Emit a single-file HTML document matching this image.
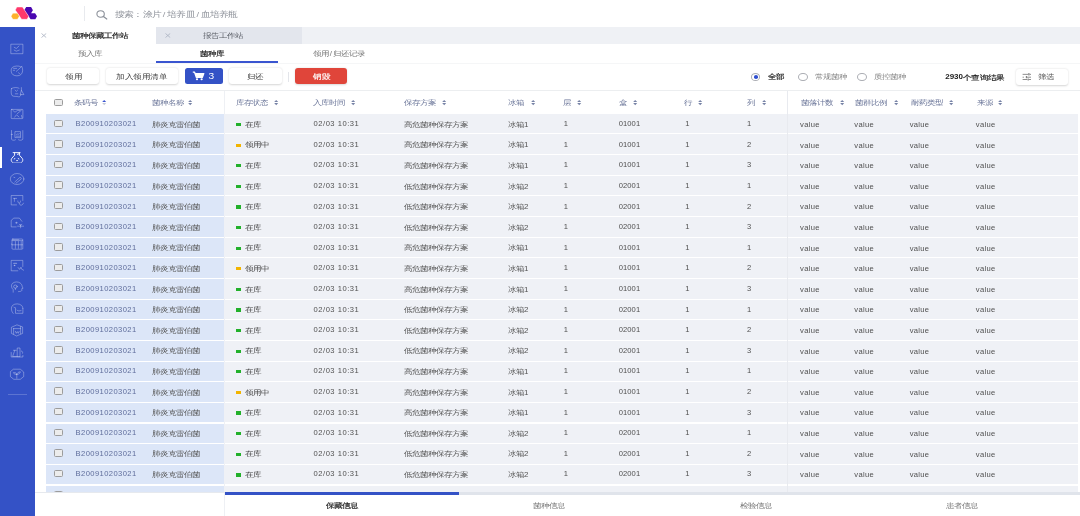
<!DOCTYPE html><html><head><meta charset="utf-8"><style>
*{margin:0;padding:0;box-sizing:border-box}
html,body{width:1080px;height:516px;overflow:hidden;background:#fff}
body{font-family:"Liberation Sans",sans-serif;position:relative;color:#555}
#w{position:absolute;left:0;top:0;width:1080px;height:516px;will-change:transform;overflow:hidden}
.a{position:absolute;white-space:nowrap}
.k{}

.s{line-height:10px;transform:scaleY(0.82);transform-origin:0 4.85px}
.s.l{transform:scaleY(0.92)}
</style></head><body><div id="w">
<div class="a" style="left:0px;top:26.5px;width:1080px;height:1px;background:#eef0f4"></div>
<svg class="a" style="left:0;top:0" width="40" height="24" viewBox="0 0 40 24">
<polygon points="24.3,9.9 26.2,7 31.1,7 32.9,10.2 31.1,13.2 35.1,13.2 37,16.3 35.3,19.3 30.6,19.3" fill="#4a06b0"/>
<polygon points="15.3,10.1 16.9,7 22.5,7 28.7,16.3 27.1,19.3 21.6,19.3" fill="#ff386c" stroke="#fff" stroke-width="0.45"/>
<polygon points="11.1,16.25 12.9,13.2 17.5,13.2 19.3,16.25 17.5,19.3 12.9,19.3" fill="#fdb22c" stroke="#fff" stroke-width="0.35"/>
</svg>
<div class="a" style="left:84px;top:6px;width:1px;height:15px;background:#e8eaee"></div>
<svg class="a" style="left:95px;top:9px" width="14" height="11" viewBox="0 0 14 11">
<ellipse cx="5.6" cy="5.0" rx="3.7" ry="3.3" fill="none" stroke="#8b9099" stroke-width="1.1"/>
<path d="M8.4 7.5 L11.8 10" stroke="#8b9099" stroke-width="1.2" stroke-linecap="round"/></svg>
<div class="a s k" style="left:115.2px;top:9.75px;font-size:9.2px;color:#8e929a;letter-spacing:0.15px">搜索：涂片<span style="margin:0 1.8px">/</span>培养皿<span style="margin:0 1.8px">/</span>血培养瓶</div>
<div class="a" style="left:0px;top:27px;width:34.6px;height:489px;background:#3452c6"></div>
<div class="a" style="left:0px;top:147.3px;width:2.4px;height:21px;background:#fff"></div>
<div class="a" style="left:8px;top:394px;width:19px;height:1px;background:rgba(255,255,255,0.2)"></div>
<svg class="a" style="left:5px;top:40px;color:rgba(255,255,255,0.34)" width="24" height="18" viewBox="0 0 24 18"><g fill="none" stroke="currentColor" stroke-width="0.95" stroke-linecap="round" stroke-linejoin="round"><rect x="6.2" y="4.2" width="11.7" height="9.5"/><path d="M9.2 7.3 L11.3 8.5 L14 6"/><path d="M9.2 10.1 L11.3 11.2 L14.3 10.1"/></g></svg>
<svg class="a" style="left:5px;top:62px;color:rgba(255,255,255,0.34)" width="24" height="18" viewBox="0 0 24 18"><g fill="none" stroke="currentColor" stroke-width="0.95" stroke-linecap="round" stroke-linejoin="round"><path d="M15.5 4.6 C13.5 3.6 9.5 3.8 7.5 5.3 C5.6 6.8 5.8 10.8 7.8 12.6 C9.8 14.2 14 14.3 16 12.5 C17.8 10.9 18.3 7.2 16.9 4.6"/><path d="M11.3 9.4 L16.8 4.4"/><path d="M8.6 6.4 H11.6"/><path d="M8.3 8.3 H9.6"/><path d="M13.5 10.8 L14.5 11.5"/></g></svg>
<svg class="a" style="left:5px;top:83px;color:rgba(255,255,255,0.34)" width="24" height="18" viewBox="0 0 24 18"><g fill="none" stroke="currentColor" stroke-width="0.95" stroke-linecap="round" stroke-linejoin="round"><path d="M6.5 5.5 C6 8 6 11 7 12.5 C9 14 11.5 13 13.5 13.8 C14.8 14.2 15.5 12.8 16 11.6"/><path d="M6.5 5.5 C9 4.2 12 4.2 14 5.2"/><path d="M10.1 7.2 L11.3 8.4 L12.6 7.2"/><path d="M10.3 10.8 H12.8"/><path d="M16.4 4.6 V7.4 L18.9 11.6 H15.2 L16.4 7.4"/></g></svg>
<svg class="a" style="left:5px;top:105px;color:rgba(255,255,255,0.34)" width="24" height="18" viewBox="0 0 24 18"><g fill="none" stroke="currentColor" stroke-width="0.95" stroke-linecap="round" stroke-linejoin="round"><rect x="6.2" y="4.4" width="11.7" height="9.2" rx="0.6"/><path d="M8 5.6 L10 7.2 L12.6 5.4 L15 5.5"/><path d="M12.3 8.6 L16.3 5.4"/><path d="M9.6 12.2 L11.5 9.8 L14 12"/><path d="M16.5 10.5 L17 12.5"/></g></svg>
<svg class="a" style="left:5px;top:126px;color:rgba(255,255,255,0.34)" width="24" height="18" viewBox="0 0 24 18"><g fill="none" stroke="currentColor" stroke-width="0.95" stroke-linecap="round" stroke-linejoin="round"><path d="M6.5 4.5 V13.3 C7.5 14.5 9.5 14.5 10.5 13.8"/><path d="M17.8 4.6 V13.3 C16.8 14.5 14.5 14.5 13.5 13.8"/><path d="M6.2 8.4 H7.6"/><rect x="10.3" y="5.6" width="5.2" height="6"/><path d="M11.5 8.3 C12.5 7.2 13.5 9 14.5 7.8"/><path d="M11.3 10.2 H14.6"/></g></svg>
<svg class="a" style="left:0px;top:148px;color:rgba(255,255,255,0.95)" width="24" height="18" viewBox="0 0 24 18"><g fill="none" stroke="currentColor" stroke-width="0.95" stroke-linecap="round" stroke-linejoin="round" stroke-width="1.05"><path d="M13.1 4.6 H20.1"/><path d="M14.6 4.7 V7.2 L11.8 10.3 C10.9 11.5 11 13.2 12.3 14.3"/><path d="M19.4 4.7 V7.2 L22.2 10.3 C23.1 11.5 23 13.2 21.7 14.3"/><path d="M12.8 14.5 H21.2" stroke-opacity="0.35"/><path d="M17.4 6.3 L19.2 5.7"/><path d="M14.2 10.9 L14.9 10.6"/><path d="M18.2 10.6 L18.9 10.9"/><path d="M16.6 12.6 H17.6"/></g></svg>
<svg class="a" style="left:5px;top:170px;color:rgba(255,255,255,0.34)" width="24" height="18" viewBox="0 0 24 18"><g fill="none" stroke="currentColor" stroke-width="0.95" stroke-linecap="round" stroke-linejoin="round"><ellipse cx="12.1" cy="9" rx="6.8" ry="5.5"/><path d="M9.8 12 L14.6 7.6 C15.6 6.8 16.9 8.4 16 9.2 L11.2 13"/><path d="M8.9 7.3 L9.8 7.6"/></g></svg>
<svg class="a" style="left:5px;top:191px;color:rgba(255,255,255,0.34)" width="24" height="18" viewBox="0 0 24 18"><g fill="none" stroke="currentColor" stroke-width="0.95" stroke-linecap="round" stroke-linejoin="round"><path d="M11.5 13.9 H6.2 V4.5 H17.8 V9.5"/><path d="M8.5 7.4 H11.6"/><path d="M9.4 7.4 V10.4"/><path d="M12.8 10 C12.8 12.8 15.6 12.8 15.6 10"/><path d="M14.3 12.5 C14.5 14.8 17.5 15 18.4 12.2"/></g></svg>
<svg class="a" style="left:5px;top:213px;color:rgba(255,255,255,0.34)" width="24" height="18" viewBox="0 0 24 18"><g fill="none" stroke="currentColor" stroke-width="0.95" stroke-linecap="round" stroke-linejoin="round"><path d="M11.2 13.9 H6.2 V7.4 L8.8 5.1 H14.4 L16.9 8.3"/><circle cx="11.3" cy="9.8" r="0.6"/><path d="M12.6 13.2 H18.6"/><path d="M15.6 11.5 V14.8"/><path d="M14.3 11.2 L15.6 12.5 L16.9 11.2"/></g></svg>
<svg class="a" style="left:5px;top:234px;color:rgba(255,255,255,0.34)" width="24" height="18" viewBox="0 0 24 18"><g fill="none" stroke="currentColor" stroke-width="0.95" stroke-linecap="round" stroke-linejoin="round"><rect x="7" y="5" width="10.8" height="10.2" rx="0.8"/><path d="M7.2 6.6 H17.6"/><path d="M8.2 5.8 H13.8"/><path d="M10.4 7.5 V14.3 M13.4 7.5 V14.3 M16.2 7.5 V14.3"/><path d="M7.2 10.8 H17.6"/><path d="M6.3 10 L7.1 10.6"/></g></svg>
<svg class="a" style="left:5px;top:256px;color:rgba(255,255,255,0.34)" width="24" height="18" viewBox="0 0 24 18"><g fill="none" stroke="currentColor" stroke-width="0.95" stroke-linecap="round" stroke-linejoin="round"><path d="M12.8 14.8 H6.2 V4.4 H17.8 V10.5"/><path d="M8.7 7.4 H11.6" stroke-width="1.1"/><circle cx="9.4" cy="9.4" r="0.4"/><path d="M13.2 11.6 L14.6 13.4 L16 11.2 L16.4 13 L18.6 14.2"/></g></svg>
<svg class="a" style="left:5px;top:277px;color:rgba(255,255,255,0.34)" width="24" height="18" viewBox="0 0 24 18"><g fill="none" stroke="currentColor" stroke-width="0.95" stroke-linecap="round" stroke-linejoin="round"><path d="M8.2 15.2 V12.6 C6.2 11 5.8 7.4 8 6 C10 4.6 13.2 4.6 15.2 6 C16.6 7 17 8.3 17.2 9.4 L18 11.3 L16.8 11.6 V13.6 C16.5 14.3 15 14.5 13.5 14.6"/><ellipse cx="10.4" cy="9.6" rx="1.8" ry="1.6"/><path d="M10.4 11.3 V12.6"/></g></svg>
<svg class="a" style="left:5px;top:299px;color:rgba(255,255,255,0.34)" width="24" height="18" viewBox="0 0 24 18"><g fill="none" stroke="currentColor" stroke-width="0.95" stroke-linecap="round" stroke-linejoin="round"><path d="M8.2 14.4 C6 12 5.7 8.2 7.8 6.2 C10 4.3 14.5 4.6 16.4 6.3 C17.6 7.4 17.8 8.5 17.8 9.4"/><path d="M9 8.3 L9.6 8.6"/><path d="M10.5 8.8 V14.3 H17.9 V9.4"/><path d="M12 11.2 C13 12.2 14.5 12 16 11.6"/></g></svg>
<svg class="a" style="left:5px;top:320px;color:rgba(255,255,255,0.34)" width="24" height="18" viewBox="0 0 24 18"><g fill="none" stroke="currentColor" stroke-width="0.95" stroke-linecap="round" stroke-linejoin="round"><path d="M11.6 5 L6.4 7.3 V13.4 L11.6 16 L17.6 13.4 V7.3 Z"/><path d="M8.6 8.4 V14 M8.6 8.6 H15.6 M15.6 6.6 V13.8"/><path d="M10.4 11.3 L11.3 13.3 L12.3 11.6 L13.3 13.3 L14.2 11.3"/></g></svg>
<svg class="a" style="left:5px;top:342px;color:rgba(255,255,255,0.34)" width="24" height="18" viewBox="0 0 24 18"><g fill="none" stroke="currentColor" stroke-width="0.95" stroke-linecap="round" stroke-linejoin="round"><path d="M6.2 10.5 V15 H17.9 V13.4"/><rect x="12.6" y="6" width="2.4" height="8.6"/><path d="M8.4 8.3 H11.3"/><path d="M9.8 8.3 L7.6 14.5 H12"/><path d="M16.4 9 C17.4 9.3 17.9 10 17.6 11.2"/></g></svg>
<svg class="a" style="left:5px;top:364px;color:rgba(255,255,255,0.34)" width="24" height="18" viewBox="0 0 24 18"><g fill="none" stroke="currentColor" stroke-width="0.95" stroke-linecap="round" stroke-linejoin="round"><path d="M8.8 5.2 H15.3 L18.7 8 V12.6 L15.3 15.3 H8.8 L5.4 12.6 V8 Z"/><path d="M11.8 10.3 V14.3"/><path d="M11.8 10.4 C10.8 10.6 8.8 10.3 8.4 8.6 C10 8.1 11.4 9 11.8 10.4 C12.4 8.7 13.6 7.8 15.4 7.8 C15 9.8 13.4 10.4 11.8 10.4"/></g></svg>
<div class="a" style="left:34.6px;top:27px;width:1046px;height:16.6px;background:#eff1f5"></div>
<div class="a" style="left:35px;top:27px;width:121px;height:16.6px;background:#fff"></div>
<div class="a" style="left:156px;top:27px;width:146px;height:16.6px;background:#e3e6ed"></div>
<svg class="a" style="left:41px;top:33px" width="6" height="5" viewBox="0 0 6 5"><path d="M0.5 0.5 L5.2 4.5 M5.2 0.5 L0.5 4.5" stroke="#a9b1c2" stroke-width="0.8"/></svg>
<svg class="a" style="left:165.2px;top:33px" width="6" height="5" viewBox="0 0 6 5"><path d="M0.5 0.5 L5.2 4.5 M5.2 0.5 L0.5 4.5" stroke="#a9b1c2" stroke-width="0.8"/></svg>
<div class="a s" style="left:72px;top:31.05px;font-size:8px;color:#222;-webkit-text-stroke:0.22px currentColor">菌种保藏工作站</div>
<div class="a s k" style="left:202.8px;top:30.85px;font-size:8px;color:#5c6068">报告工作站</div>
<div class="a s k" style="left:78.4px;top:48.75px;font-size:8px;color:#777">预入库</div>
<div class="a s" style="left:200.4px;top:48.75px;font-size:8px;color:#222;-webkit-text-stroke:0.22px currentColor">菌种库</div>
<div class="a s k" style="left:313.1px;top:48.75px;font-size:8px;color:#777">领用<span style="margin:0 0.75px">/</span>归还记录</div>
<div class="a" style="left:156.3px;top:61.1px;width:121.5px;height:2px;background:#3a55d0"></div>
<div class="a" style="left:34.6px;top:63.2px;width:1046px;height:1px;background:#f5f6f7"></div>
<div class="a" style="left:46.7px;top:68px;width:52.6px;height:16px;background:#fff;border-radius:3px;box-shadow:0 0.6px 2px rgba(0,0,0,0.17)"></div><div class="a s k" style="left:65.0px;top:71.65px;font-size:8px;color:#3a3a3a;letter-spacing:0.6px">领用</div>
<div class="a" style="left:105.9px;top:68px;width:72.2px;height:16px;background:#fff;border-radius:3px;box-shadow:0 0.6px 2px rgba(0,0,0,0.17)"></div><div class="a s k" style="left:116px;top:71.65px;font-size:8px;color:#3a3a3a;letter-spacing:0.6px">加入领用清单</div>
<div class="a" style="left:185px;top:67.8px;width:37.8px;height:16px;background:#3452c6;border-radius:2.5px"></div>
<svg class="a" style="left:191.5px;top:70.8px" width="13" height="10" viewBox="0 0 13 10">
<path d="M0.8 1.2 H2.6 L4.3 6.4 H10.3 L11.8 2.6 H3.3" fill="none" stroke="#fff" stroke-width="1.3" stroke-linejoin="round"/>
<path d="M3.6 2.6 H11.8 L10.3 6.4 H4.3Z" fill="#fff"/>
<ellipse cx="5.0" cy="8.3" rx="1.1" ry="0.95" fill="#fff"/><ellipse cx="9.6" cy="8.3" rx="1.1" ry="0.95" fill="#fff"/></svg>
<div class="a s l" style="left:208.4px;top:70.75px;font-size:10.2px;color:#fff">3</div>
<div class="a" style="left:229.2px;top:68px;width:52.5px;height:16px;background:#fff;border-radius:3px;box-shadow:0 0.6px 2px rgba(0,0,0,0.17)"></div><div class="a s k" style="left:246.7px;top:71.65px;font-size:8px;color:#3a3a3a;letter-spacing:0.6px">归还</div>
<div class="a" style="left:288px;top:71.7px;width:1px;height:10px;background:#e3e5ea"></div>
<div class="a" style="left:295px;top:68.3px;width:51.7px;height:16.2px;background:#e0453a;border-radius:3px;box-shadow:0 0.6px 2px rgba(0,0,0,0.15)"></div>
<div class="a s" style="left:313.3px;top:71.75px;font-size:8px;color:#fff;-webkit-text-stroke:0.22px currentColor;letter-spacing:0.5px">销毁</div>
<div class="a" style="left:751.1px;top:72.9px;width:9.4px;height:8px;background:#fff;border:1px solid #acaeb4;border-radius:50%"></div><div class="a" style="left:753.6px;top:75.15px;width:4.4px;height:3.7px;background:#2f4fd0;border-radius:50%"></div>
<div class="a s" style="left:768px;top:72.45px;font-size:8px;color:#222;-webkit-text-stroke:0.22px currentColor">全部</div>
<div class="a" style="left:798.3px;top:72.9px;width:9.4px;height:8px;background:#fff;border:1px solid #acaeb4;border-radius:50%"></div>
<div class="a s k" style="left:815.2px;top:72.45px;font-size:8px;color:#888">常规菌种</div>
<div class="a" style="left:857.3px;top:72.9px;width:9.4px;height:8px;background:#fff;border:1px solid #acaeb4;border-radius:50%"></div>
<div class="a s k" style="left:873.8px;top:72.45px;font-size:8px;color:#888">质控菌种</div>
<div class="a s l" style="left:945.2px;top:72.45px;font-size:8px;color:#222;font-weight:bold">2930</div>
<div class="a s" style="left:963.2px;top:72.65px;font-size:8px;color:#222;-webkit-text-stroke:0.22px currentColor;letter-spacing:0.25px">个查询结果</div>
<div class="a" style="left:1016px;top:69px;width:52px;height:16px;background:#fff;border-radius:3px;box-shadow:0 0.6px 2px rgba(0,0,0,0.17)"></div>
<svg class="a" style="left:1022px;top:72px" width="10" height="10" viewBox="0 0 10 10">
<g stroke="#7a7a7a" stroke-width="0.85" fill="none">
<path d="M0.6 2.35 H6.3 M7.5 2.35 H9"/><path d="M6.9 1.1 V3.6" stroke-width="1.1"/>
<path d="M0.6 5.2 H1.9 M5 5.2 H9"/><path d="M4.4 4.1 V6.3" stroke-width="1.1"/>
<path d="M0.6 7.5 H5.4 M7 7.5 H9"/><path d="M6.2 6.4 V8.6" stroke-width="1.1"/>
</g></svg>
<div class="a s k" style="left:1038px;top:72.45px;font-size:8px;color:#555">筛选</div>
<div class="a" style="left:34.6px;top:89.9px;width:1046px;height:1px;background:#eceef0"></div>
<div class="a" style="left:223.6px;top:90.5px;width:1px;height:402px;background:#eef0f4"></div>
<div class="a" style="left:54.2px;top:98.90px;width:8.6px;height:7.4px;border:1px solid #9c9c9c;border-radius:1.5px;background:#ececec"></div>
<div class="a s k" style="left:74px;top:97.90px;font-size:8px;color:#6b7699">条码号</div>
<svg class="a" style="left:102px;top:100px" width="5" height="6" viewBox="0 0 5 6"><path d="M0.2 2.1 L2.2 0 L4.2 2.1Z" fill="#3a55d0"/><path d="M0.2 3 L2.2 5.2 L4.2 3Z" fill="#c5cad6"/></svg>
<div class="a s k" style="left:152px;top:97.90px;font-size:8px;color:#6b7699">菌种名称</div>
<svg class="a" style="left:188px;top:100px" width="5" height="6" viewBox="0 0 5 6"><path d="M0.2 2.1 L2.2 0 L4.2 2.1Z" fill="#7783a6"/><path d="M0.2 3 L2.2 5.2 L4.2 3Z" fill="#7783a6"/></svg>
<div class="a s k" style="left:236px;top:97.90px;font-size:8px;color:#6b7699">库存状态</div>
<svg class="a" style="left:274px;top:100px" width="5" height="6" viewBox="0 0 5 6"><path d="M0.2 2.1 L2.2 0 L4.2 2.1Z" fill="#7783a6"/><path d="M0.2 3 L2.2 5.2 L4.2 3Z" fill="#7783a6"/></svg>
<div class="a s k" style="left:313.3px;top:97.90px;font-size:8px;color:#6b7699">入库时间</div>
<svg class="a" style="left:351px;top:100px" width="5" height="6" viewBox="0 0 5 6"><path d="M0.2 2.1 L2.2 0 L4.2 2.1Z" fill="#7783a6"/><path d="M0.2 3 L2.2 5.2 L4.2 3Z" fill="#7783a6"/></svg>
<div class="a s k" style="left:404px;top:97.90px;font-size:8px;color:#6b7699">保存方案</div>
<svg class="a" style="left:442px;top:100px" width="5" height="6" viewBox="0 0 5 6"><path d="M0.2 2.1 L2.2 0 L4.2 2.1Z" fill="#7783a6"/><path d="M0.2 3 L2.2 5.2 L4.2 3Z" fill="#7783a6"/></svg>
<div class="a s k" style="left:508px;top:97.90px;font-size:8px;color:#6b7699">冰箱</div>
<svg class="a" style="left:531px;top:100px" width="5" height="6" viewBox="0 0 5 6"><path d="M0.2 2.1 L2.2 0 L4.2 2.1Z" fill="#7783a6"/><path d="M0.2 3 L2.2 5.2 L4.2 3Z" fill="#7783a6"/></svg>
<div class="a s k" style="left:562.8px;top:97.90px;font-size:8px;color:#6b7699">层</div>
<svg class="a" style="left:577px;top:100px" width="5" height="6" viewBox="0 0 5 6"><path d="M0.2 2.1 L2.2 0 L4.2 2.1Z" fill="#7783a6"/><path d="M0.2 3 L2.2 5.2 L4.2 3Z" fill="#7783a6"/></svg>
<div class="a s k" style="left:619.2px;top:97.90px;font-size:8px;color:#6b7699">盒</div>
<svg class="a" style="left:633px;top:100px" width="5" height="6" viewBox="0 0 5 6"><path d="M0.2 2.1 L2.2 0 L4.2 2.1Z" fill="#7783a6"/><path d="M0.2 3 L2.2 5.2 L4.2 3Z" fill="#7783a6"/></svg>
<div class="a s k" style="left:684.4px;top:97.90px;font-size:8px;color:#6b7699">行</div>
<svg class="a" style="left:698px;top:100px" width="5" height="6" viewBox="0 0 5 6"><path d="M0.2 2.1 L2.2 0 L4.2 2.1Z" fill="#7783a6"/><path d="M0.2 3 L2.2 5.2 L4.2 3Z" fill="#7783a6"/></svg>
<div class="a s k" style="left:747px;top:97.90px;font-size:8px;color:#6b7699">列</div>
<svg class="a" style="left:762px;top:100px" width="5" height="6" viewBox="0 0 5 6"><path d="M0.2 2.1 L2.2 0 L4.2 2.1Z" fill="#7783a6"/><path d="M0.2 3 L2.2 5.2 L4.2 3Z" fill="#7783a6"/></svg>
<div class="a s k" style="left:801px;top:97.90px;font-size:8px;color:#6b7699">菌落计数</div>
<svg class="a" style="left:840px;top:100px" width="5" height="6" viewBox="0 0 5 6"><path d="M0.2 2.1 L2.2 0 L4.2 2.1Z" fill="#7783a6"/><path d="M0.2 3 L2.2 5.2 L4.2 3Z" fill="#7783a6"/></svg>
<div class="a s k" style="left:855.2px;top:97.90px;font-size:8px;color:#6b7699">菌群比例</div>
<svg class="a" style="left:894px;top:100px" width="5" height="6" viewBox="0 0 5 6"><path d="M0.2 2.1 L2.2 0 L4.2 2.1Z" fill="#7783a6"/><path d="M0.2 3 L2.2 5.2 L4.2 3Z" fill="#7783a6"/></svg>
<div class="a s k" style="left:910.6px;top:97.90px;font-size:8px;color:#6b7699">耐药类型</div>
<svg class="a" style="left:949px;top:100px" width="5" height="6" viewBox="0 0 5 6"><path d="M0.2 2.1 L2.2 0 L4.2 2.1Z" fill="#7783a6"/><path d="M0.2 3 L2.2 5.2 L4.2 3Z" fill="#7783a6"/></svg>
<div class="a s k" style="left:976.7px;top:97.90px;font-size:8px;color:#6b7699">来源</div>
<svg class="a" style="left:998px;top:100px" width="5" height="6" viewBox="0 0 5 6"><path d="M0.2 2.1 L2.2 0 L4.2 2.1Z" fill="#7783a6"/><path d="M0.2 3 L2.2 5.2 L4.2 3Z" fill="#7783a6"/></svg>
<div class="a" style="left:46px;top:113.8px;width:178px;height:19.6px;background:#dce6f8"></div>
<div class="a" style="left:224px;top:113.8px;width:853.8px;height:19.6px;background:#eff1f6"></div>
<div class="a" style="left:54.2px;top:119.55px;width:8.6px;height:7.4px;border:1px solid #9c9c9c;border-radius:1.5px;background:#ececec"></div>
<div class="a s l" style="left:75.6px;top:119.10px;font-size:7.6px;color:#5f6d9c;letter-spacing:0.4px">B200910203021</div>
<div class="a s k" style="left:152px;top:119.70px;font-size:8px;color:#555">肺炎克雷伯菌</div>
<div class="a" style="left:236px;top:122.95px;width:4.6px;height:3.2px;background:#22b02a"></div>
<div class="a s k" style="left:245.4px;top:119.70px;font-size:8px;color:#444">在库</div>
<div class="a s l" style="left:313.6px;top:119.10px;font-size:7.6px;color:#505050;letter-spacing:0.5px">02/03 10:31</div>
<div class="a s k" style="left:404px;top:119.70px;font-size:8px;color:#555">高危菌种保存方案</div>
<div class="a s k" style="left:508px;top:119.70px;font-size:8px;color:#555">冰箱1</div>
<div class="a s l" style="left:563.7px;top:119.10px;font-size:7.6px;color:#505050">1</div>
<div class="a s l" style="left:618.8px;top:119.10px;font-size:7.6px;color:#505050;letter-spacing:0.05px">01001</div>
<div class="a s l" style="left:685.3px;top:119.10px;font-size:7.6px;color:#505050">1</div>
<div class="a s l" style="left:747px;top:119.10px;font-size:7.6px;color:#505050">1</div>
<div class="a s l" style="left:800.1px;top:119.90px;font-size:7.6px;color:#505050;letter-spacing:0.3px">value</div>
<div class="a s l" style="left:854.3px;top:119.90px;font-size:7.6px;color:#505050;letter-spacing:0.3px">value</div>
<div class="a s l" style="left:909.7px;top:119.90px;font-size:7.6px;color:#505050;letter-spacing:0.3px">value</div>
<div class="a s l" style="left:975.8px;top:119.90px;font-size:7.6px;color:#505050;letter-spacing:0.3px">value</div>
<div class="a" style="left:46px;top:134.45px;width:178px;height:19.6px;background:#dce6f8"></div>
<div class="a" style="left:224px;top:134.45px;width:853.8px;height:19.6px;background:#eff1f6"></div>
<div class="a" style="left:54.2px;top:140.16px;width:8.6px;height:7.4px;border:1px solid #9c9c9c;border-radius:1.5px;background:#ececec"></div>
<div class="a s l" style="left:75.6px;top:139.71px;font-size:7.6px;color:#5f6d9c;letter-spacing:0.4px">B200910203021</div>
<div class="a s k" style="left:152px;top:140.31px;font-size:8px;color:#555">肺炎克雷伯菌</div>
<div class="a" style="left:236px;top:143.56px;width:4.6px;height:3.2px;background:#f2b400"></div>
<div class="a s k" style="left:245.4px;top:140.31px;font-size:8px;color:#444">领用中</div>
<div class="a s l" style="left:313.6px;top:139.71px;font-size:7.6px;color:#505050;letter-spacing:0.5px">02/03 10:31</div>
<div class="a s k" style="left:404px;top:140.31px;font-size:8px;color:#555">高危菌种保存方案</div>
<div class="a s k" style="left:508px;top:140.31px;font-size:8px;color:#555">冰箱1</div>
<div class="a s l" style="left:563.7px;top:139.71px;font-size:7.6px;color:#505050">1</div>
<div class="a s l" style="left:618.8px;top:139.71px;font-size:7.6px;color:#505050;letter-spacing:0.05px">01001</div>
<div class="a s l" style="left:685.3px;top:139.71px;font-size:7.6px;color:#505050">1</div>
<div class="a s l" style="left:747px;top:139.71px;font-size:7.6px;color:#505050">2</div>
<div class="a s l" style="left:800.1px;top:140.51px;font-size:7.6px;color:#505050;letter-spacing:0.3px">value</div>
<div class="a s l" style="left:854.3px;top:140.51px;font-size:7.6px;color:#505050;letter-spacing:0.3px">value</div>
<div class="a s l" style="left:909.7px;top:140.51px;font-size:7.6px;color:#505050;letter-spacing:0.3px">value</div>
<div class="a s l" style="left:975.8px;top:140.51px;font-size:7.6px;color:#505050;letter-spacing:0.3px">value</div>
<div class="a" style="left:46px;top:155.1px;width:178px;height:19.6px;background:#dce6f8"></div>
<div class="a" style="left:224px;top:155.1px;width:853.8px;height:19.6px;background:#eff1f6"></div>
<div class="a" style="left:54.2px;top:160.77px;width:8.6px;height:7.4px;border:1px solid #9c9c9c;border-radius:1.5px;background:#ececec"></div>
<div class="a s l" style="left:75.6px;top:160.32px;font-size:7.6px;color:#5f6d9c;letter-spacing:0.4px">B200910203021</div>
<div class="a s k" style="left:152px;top:160.92px;font-size:8px;color:#555">肺炎克雷伯菌</div>
<div class="a" style="left:236px;top:164.17px;width:4.6px;height:3.2px;background:#22b02a"></div>
<div class="a s k" style="left:245.4px;top:160.92px;font-size:8px;color:#444">在库</div>
<div class="a s l" style="left:313.6px;top:160.32px;font-size:7.6px;color:#505050;letter-spacing:0.5px">02/03 10:31</div>
<div class="a s k" style="left:404px;top:160.92px;font-size:8px;color:#555">高危菌种保存方案</div>
<div class="a s k" style="left:508px;top:160.92px;font-size:8px;color:#555">冰箱1</div>
<div class="a s l" style="left:563.7px;top:160.32px;font-size:7.6px;color:#505050">1</div>
<div class="a s l" style="left:618.8px;top:160.32px;font-size:7.6px;color:#505050;letter-spacing:0.05px">01001</div>
<div class="a s l" style="left:685.3px;top:160.32px;font-size:7.6px;color:#505050">1</div>
<div class="a s l" style="left:747px;top:160.32px;font-size:7.6px;color:#505050">3</div>
<div class="a s l" style="left:800.1px;top:161.12px;font-size:7.6px;color:#505050;letter-spacing:0.3px">value</div>
<div class="a s l" style="left:854.3px;top:161.12px;font-size:7.6px;color:#505050;letter-spacing:0.3px">value</div>
<div class="a s l" style="left:909.7px;top:161.12px;font-size:7.6px;color:#505050;letter-spacing:0.3px">value</div>
<div class="a s l" style="left:975.8px;top:161.12px;font-size:7.6px;color:#505050;letter-spacing:0.3px">value</div>
<div class="a" style="left:46px;top:175.75px;width:178px;height:19.6px;background:#dce6f8"></div>
<div class="a" style="left:224px;top:175.75px;width:853.8px;height:19.6px;background:#eff1f6"></div>
<div class="a" style="left:54.2px;top:181.38px;width:8.6px;height:7.4px;border:1px solid #9c9c9c;border-radius:1.5px;background:#ececec"></div>
<div class="a s l" style="left:75.6px;top:180.93px;font-size:7.6px;color:#5f6d9c;letter-spacing:0.4px">B200910203021</div>
<div class="a s k" style="left:152px;top:181.53px;font-size:8px;color:#555">肺炎克雷伯菌</div>
<div class="a" style="left:236px;top:184.78px;width:4.6px;height:3.2px;background:#22b02a"></div>
<div class="a s k" style="left:245.4px;top:181.53px;font-size:8px;color:#444">在库</div>
<div class="a s l" style="left:313.6px;top:180.93px;font-size:7.6px;color:#505050;letter-spacing:0.5px">02/03 10:31</div>
<div class="a s k" style="left:404px;top:181.53px;font-size:8px;color:#555">低危菌种保存方案</div>
<div class="a s k" style="left:508px;top:181.53px;font-size:8px;color:#555">冰箱2</div>
<div class="a s l" style="left:563.7px;top:180.93px;font-size:7.6px;color:#505050">1</div>
<div class="a s l" style="left:618.8px;top:180.93px;font-size:7.6px;color:#505050;letter-spacing:0.05px">02001</div>
<div class="a s l" style="left:685.3px;top:180.93px;font-size:7.6px;color:#505050">1</div>
<div class="a s l" style="left:747px;top:180.93px;font-size:7.6px;color:#505050">1</div>
<div class="a s l" style="left:800.1px;top:181.73px;font-size:7.6px;color:#505050;letter-spacing:0.3px">value</div>
<div class="a s l" style="left:854.3px;top:181.73px;font-size:7.6px;color:#505050;letter-spacing:0.3px">value</div>
<div class="a s l" style="left:909.7px;top:181.73px;font-size:7.6px;color:#505050;letter-spacing:0.3px">value</div>
<div class="a s l" style="left:975.8px;top:181.73px;font-size:7.6px;color:#505050;letter-spacing:0.3px">value</div>
<div class="a" style="left:46px;top:196.4px;width:178px;height:19.6px;background:#dce6f8"></div>
<div class="a" style="left:224px;top:196.4px;width:853.8px;height:19.6px;background:#eff1f6"></div>
<div class="a" style="left:54.2px;top:201.99px;width:8.6px;height:7.4px;border:1px solid #9c9c9c;border-radius:1.5px;background:#ececec"></div>
<div class="a s l" style="left:75.6px;top:201.54px;font-size:7.6px;color:#5f6d9c;letter-spacing:0.4px">B200910203021</div>
<div class="a s k" style="left:152px;top:202.14px;font-size:8px;color:#555">肺炎克雷伯菌</div>
<div class="a" style="left:236px;top:205.39px;width:4.6px;height:3.2px;background:#22b02a"></div>
<div class="a s k" style="left:245.4px;top:202.14px;font-size:8px;color:#444">在库</div>
<div class="a s l" style="left:313.6px;top:201.54px;font-size:7.6px;color:#505050;letter-spacing:0.5px">02/03 10:31</div>
<div class="a s k" style="left:404px;top:202.14px;font-size:8px;color:#555">低危菌种保存方案</div>
<div class="a s k" style="left:508px;top:202.14px;font-size:8px;color:#555">冰箱2</div>
<div class="a s l" style="left:563.7px;top:201.54px;font-size:7.6px;color:#505050">1</div>
<div class="a s l" style="left:618.8px;top:201.54px;font-size:7.6px;color:#505050;letter-spacing:0.05px">02001</div>
<div class="a s l" style="left:685.3px;top:201.54px;font-size:7.6px;color:#505050">1</div>
<div class="a s l" style="left:747px;top:201.54px;font-size:7.6px;color:#505050">2</div>
<div class="a s l" style="left:800.1px;top:202.34px;font-size:7.6px;color:#505050;letter-spacing:0.3px">value</div>
<div class="a s l" style="left:854.3px;top:202.34px;font-size:7.6px;color:#505050;letter-spacing:0.3px">value</div>
<div class="a s l" style="left:909.7px;top:202.34px;font-size:7.6px;color:#505050;letter-spacing:0.3px">value</div>
<div class="a s l" style="left:975.8px;top:202.34px;font-size:7.6px;color:#505050;letter-spacing:0.3px">value</div>
<div class="a" style="left:46px;top:217.05px;width:178px;height:19.6px;background:#dce6f8"></div>
<div class="a" style="left:224px;top:217.05px;width:853.8px;height:19.6px;background:#eff1f6"></div>
<div class="a" style="left:54.2px;top:222.60px;width:8.6px;height:7.4px;border:1px solid #9c9c9c;border-radius:1.5px;background:#ececec"></div>
<div class="a s l" style="left:75.6px;top:222.15px;font-size:7.6px;color:#5f6d9c;letter-spacing:0.4px">B200910203021</div>
<div class="a s k" style="left:152px;top:222.75px;font-size:8px;color:#555">肺炎克雷伯菌</div>
<div class="a" style="left:236px;top:226.0px;width:4.6px;height:3.2px;background:#22b02a"></div>
<div class="a s k" style="left:245.4px;top:222.75px;font-size:8px;color:#444">在库</div>
<div class="a s l" style="left:313.6px;top:222.15px;font-size:7.6px;color:#505050;letter-spacing:0.5px">02/03 10:31</div>
<div class="a s k" style="left:404px;top:222.75px;font-size:8px;color:#555">低危菌种保存方案</div>
<div class="a s k" style="left:508px;top:222.75px;font-size:8px;color:#555">冰箱2</div>
<div class="a s l" style="left:563.7px;top:222.15px;font-size:7.6px;color:#505050">1</div>
<div class="a s l" style="left:618.8px;top:222.15px;font-size:7.6px;color:#505050;letter-spacing:0.05px">02001</div>
<div class="a s l" style="left:685.3px;top:222.15px;font-size:7.6px;color:#505050">1</div>
<div class="a s l" style="left:747px;top:222.15px;font-size:7.6px;color:#505050">3</div>
<div class="a s l" style="left:800.1px;top:222.95px;font-size:7.6px;color:#505050;letter-spacing:0.3px">value</div>
<div class="a s l" style="left:854.3px;top:222.95px;font-size:7.6px;color:#505050;letter-spacing:0.3px">value</div>
<div class="a s l" style="left:909.7px;top:222.95px;font-size:7.6px;color:#505050;letter-spacing:0.3px">value</div>
<div class="a s l" style="left:975.8px;top:222.95px;font-size:7.6px;color:#505050;letter-spacing:0.3px">value</div>
<div class="a" style="left:46px;top:237.7px;width:178px;height:19.6px;background:#dce6f8"></div>
<div class="a" style="left:224px;top:237.7px;width:853.8px;height:19.6px;background:#eff1f6"></div>
<div class="a" style="left:54.2px;top:243.21px;width:8.6px;height:7.4px;border:1px solid #9c9c9c;border-radius:1.5px;background:#ececec"></div>
<div class="a s l" style="left:75.6px;top:242.76px;font-size:7.6px;color:#5f6d9c;letter-spacing:0.4px">B200910203021</div>
<div class="a s k" style="left:152px;top:243.36px;font-size:8px;color:#555">肺炎克雷伯菌</div>
<div class="a" style="left:236px;top:246.61px;width:4.6px;height:3.2px;background:#22b02a"></div>
<div class="a s k" style="left:245.4px;top:243.36px;font-size:8px;color:#444">在库</div>
<div class="a s l" style="left:313.6px;top:242.76px;font-size:7.6px;color:#505050;letter-spacing:0.5px">02/03 10:31</div>
<div class="a s k" style="left:404px;top:243.36px;font-size:8px;color:#555">高危菌种保存方案</div>
<div class="a s k" style="left:508px;top:243.36px;font-size:8px;color:#555">冰箱1</div>
<div class="a s l" style="left:563.7px;top:242.76px;font-size:7.6px;color:#505050">1</div>
<div class="a s l" style="left:618.8px;top:242.76px;font-size:7.6px;color:#505050;letter-spacing:0.05px">01001</div>
<div class="a s l" style="left:685.3px;top:242.76px;font-size:7.6px;color:#505050">1</div>
<div class="a s l" style="left:747px;top:242.76px;font-size:7.6px;color:#505050">1</div>
<div class="a s l" style="left:800.1px;top:243.56px;font-size:7.6px;color:#505050;letter-spacing:0.3px">value</div>
<div class="a s l" style="left:854.3px;top:243.56px;font-size:7.6px;color:#505050;letter-spacing:0.3px">value</div>
<div class="a s l" style="left:909.7px;top:243.56px;font-size:7.6px;color:#505050;letter-spacing:0.3px">value</div>
<div class="a s l" style="left:975.8px;top:243.56px;font-size:7.6px;color:#505050;letter-spacing:0.3px">value</div>
<div class="a" style="left:46px;top:258.35px;width:178px;height:19.6px;background:#dce6f8"></div>
<div class="a" style="left:224px;top:258.35px;width:853.8px;height:19.6px;background:#eff1f6"></div>
<div class="a" style="left:54.2px;top:263.82px;width:8.6px;height:7.4px;border:1px solid #9c9c9c;border-radius:1.5px;background:#ececec"></div>
<div class="a s l" style="left:75.6px;top:263.37px;font-size:7.6px;color:#5f6d9c;letter-spacing:0.4px">B200910203021</div>
<div class="a s k" style="left:152px;top:263.97px;font-size:8px;color:#555">肺炎克雷伯菌</div>
<div class="a" style="left:236px;top:267.22px;width:4.6px;height:3.2px;background:#f2b400"></div>
<div class="a s k" style="left:245.4px;top:263.97px;font-size:8px;color:#444">领用中</div>
<div class="a s l" style="left:313.6px;top:263.37px;font-size:7.6px;color:#505050;letter-spacing:0.5px">02/03 10:31</div>
<div class="a s k" style="left:404px;top:263.97px;font-size:8px;color:#555">高危菌种保存方案</div>
<div class="a s k" style="left:508px;top:263.97px;font-size:8px;color:#555">冰箱1</div>
<div class="a s l" style="left:563.7px;top:263.37px;font-size:7.6px;color:#505050">1</div>
<div class="a s l" style="left:618.8px;top:263.37px;font-size:7.6px;color:#505050;letter-spacing:0.05px">01001</div>
<div class="a s l" style="left:685.3px;top:263.37px;font-size:7.6px;color:#505050">1</div>
<div class="a s l" style="left:747px;top:263.37px;font-size:7.6px;color:#505050">2</div>
<div class="a s l" style="left:800.1px;top:264.17px;font-size:7.6px;color:#505050;letter-spacing:0.3px">value</div>
<div class="a s l" style="left:854.3px;top:264.17px;font-size:7.6px;color:#505050;letter-spacing:0.3px">value</div>
<div class="a s l" style="left:909.7px;top:264.17px;font-size:7.6px;color:#505050;letter-spacing:0.3px">value</div>
<div class="a s l" style="left:975.8px;top:264.17px;font-size:7.6px;color:#505050;letter-spacing:0.3px">value</div>
<div class="a" style="left:46px;top:279.0px;width:178px;height:19.6px;background:#dce6f8"></div>
<div class="a" style="left:224px;top:279.0px;width:853.8px;height:19.6px;background:#eff1f6"></div>
<div class="a" style="left:54.2px;top:284.43px;width:8.6px;height:7.4px;border:1px solid #9c9c9c;border-radius:1.5px;background:#ececec"></div>
<div class="a s l" style="left:75.6px;top:283.98px;font-size:7.6px;color:#5f6d9c;letter-spacing:0.4px">B200910203021</div>
<div class="a s k" style="left:152px;top:284.58px;font-size:8px;color:#555">肺炎克雷伯菌</div>
<div class="a" style="left:236px;top:287.83px;width:4.6px;height:3.2px;background:#22b02a"></div>
<div class="a s k" style="left:245.4px;top:284.58px;font-size:8px;color:#444">在库</div>
<div class="a s l" style="left:313.6px;top:283.98px;font-size:7.6px;color:#505050;letter-spacing:0.5px">02/03 10:31</div>
<div class="a s k" style="left:404px;top:284.58px;font-size:8px;color:#555">高危菌种保存方案</div>
<div class="a s k" style="left:508px;top:284.58px;font-size:8px;color:#555">冰箱1</div>
<div class="a s l" style="left:563.7px;top:283.98px;font-size:7.6px;color:#505050">1</div>
<div class="a s l" style="left:618.8px;top:283.98px;font-size:7.6px;color:#505050;letter-spacing:0.05px">01001</div>
<div class="a s l" style="left:685.3px;top:283.98px;font-size:7.6px;color:#505050">1</div>
<div class="a s l" style="left:747px;top:283.98px;font-size:7.6px;color:#505050">3</div>
<div class="a s l" style="left:800.1px;top:284.78px;font-size:7.6px;color:#505050;letter-spacing:0.3px">value</div>
<div class="a s l" style="left:854.3px;top:284.78px;font-size:7.6px;color:#505050;letter-spacing:0.3px">value</div>
<div class="a s l" style="left:909.7px;top:284.78px;font-size:7.6px;color:#505050;letter-spacing:0.3px">value</div>
<div class="a s l" style="left:975.8px;top:284.78px;font-size:7.6px;color:#505050;letter-spacing:0.3px">value</div>
<div class="a" style="left:46px;top:299.65px;width:178px;height:19.6px;background:#dce6f8"></div>
<div class="a" style="left:224px;top:299.65px;width:853.8px;height:19.6px;background:#eff1f6"></div>
<div class="a" style="left:54.2px;top:305.04px;width:8.6px;height:7.4px;border:1px solid #9c9c9c;border-radius:1.5px;background:#ececec"></div>
<div class="a s l" style="left:75.6px;top:304.59px;font-size:7.6px;color:#5f6d9c;letter-spacing:0.4px">B200910203021</div>
<div class="a s k" style="left:152px;top:305.19px;font-size:8px;color:#555">肺炎克雷伯菌</div>
<div class="a" style="left:236px;top:308.44px;width:4.6px;height:3.2px;background:#22b02a"></div>
<div class="a s k" style="left:245.4px;top:305.19px;font-size:8px;color:#444">在库</div>
<div class="a s l" style="left:313.6px;top:304.59px;font-size:7.6px;color:#505050;letter-spacing:0.5px">02/03 10:31</div>
<div class="a s k" style="left:404px;top:305.19px;font-size:8px;color:#555">低危菌种保存方案</div>
<div class="a s k" style="left:508px;top:305.19px;font-size:8px;color:#555">冰箱2</div>
<div class="a s l" style="left:563.7px;top:304.59px;font-size:7.6px;color:#505050">1</div>
<div class="a s l" style="left:618.8px;top:304.59px;font-size:7.6px;color:#505050;letter-spacing:0.05px">02001</div>
<div class="a s l" style="left:685.3px;top:304.59px;font-size:7.6px;color:#505050">1</div>
<div class="a s l" style="left:747px;top:304.59px;font-size:7.6px;color:#505050">1</div>
<div class="a s l" style="left:800.1px;top:305.39px;font-size:7.6px;color:#505050;letter-spacing:0.3px">value</div>
<div class="a s l" style="left:854.3px;top:305.39px;font-size:7.6px;color:#505050;letter-spacing:0.3px">value</div>
<div class="a s l" style="left:909.7px;top:305.39px;font-size:7.6px;color:#505050;letter-spacing:0.3px">value</div>
<div class="a s l" style="left:975.8px;top:305.39px;font-size:7.6px;color:#505050;letter-spacing:0.3px">value</div>
<div class="a" style="left:46px;top:320.3px;width:178px;height:19.6px;background:#dce6f8"></div>
<div class="a" style="left:224px;top:320.3px;width:853.8px;height:19.6px;background:#eff1f6"></div>
<div class="a" style="left:54.2px;top:325.65px;width:8.6px;height:7.4px;border:1px solid #9c9c9c;border-radius:1.5px;background:#ececec"></div>
<div class="a s l" style="left:75.6px;top:325.20px;font-size:7.6px;color:#5f6d9c;letter-spacing:0.4px">B200910203021</div>
<div class="a s k" style="left:152px;top:325.80px;font-size:8px;color:#555">肺炎克雷伯菌</div>
<div class="a" style="left:236px;top:329.05px;width:4.6px;height:3.2px;background:#22b02a"></div>
<div class="a s k" style="left:245.4px;top:325.80px;font-size:8px;color:#444">在库</div>
<div class="a s l" style="left:313.6px;top:325.20px;font-size:7.6px;color:#505050;letter-spacing:0.5px">02/03 10:31</div>
<div class="a s k" style="left:404px;top:325.80px;font-size:8px;color:#555">低危菌种保存方案</div>
<div class="a s k" style="left:508px;top:325.80px;font-size:8px;color:#555">冰箱2</div>
<div class="a s l" style="left:563.7px;top:325.20px;font-size:7.6px;color:#505050">1</div>
<div class="a s l" style="left:618.8px;top:325.20px;font-size:7.6px;color:#505050;letter-spacing:0.05px">02001</div>
<div class="a s l" style="left:685.3px;top:325.20px;font-size:7.6px;color:#505050">1</div>
<div class="a s l" style="left:747px;top:325.20px;font-size:7.6px;color:#505050">2</div>
<div class="a s l" style="left:800.1px;top:326.00px;font-size:7.6px;color:#505050;letter-spacing:0.3px">value</div>
<div class="a s l" style="left:854.3px;top:326.00px;font-size:7.6px;color:#505050;letter-spacing:0.3px">value</div>
<div class="a s l" style="left:909.7px;top:326.00px;font-size:7.6px;color:#505050;letter-spacing:0.3px">value</div>
<div class="a s l" style="left:975.8px;top:326.00px;font-size:7.6px;color:#505050;letter-spacing:0.3px">value</div>
<div class="a" style="left:46px;top:340.95px;width:178px;height:19.6px;background:#dce6f8"></div>
<div class="a" style="left:224px;top:340.95px;width:853.8px;height:19.6px;background:#eff1f6"></div>
<div class="a" style="left:54.2px;top:346.26px;width:8.6px;height:7.4px;border:1px solid #9c9c9c;border-radius:1.5px;background:#ececec"></div>
<div class="a s l" style="left:75.6px;top:345.81px;font-size:7.6px;color:#5f6d9c;letter-spacing:0.4px">B200910203021</div>
<div class="a s k" style="left:152px;top:346.41px;font-size:8px;color:#555">肺炎克雷伯菌</div>
<div class="a" style="left:236px;top:349.66px;width:4.6px;height:3.2px;background:#22b02a"></div>
<div class="a s k" style="left:245.4px;top:346.41px;font-size:8px;color:#444">在库</div>
<div class="a s l" style="left:313.6px;top:345.81px;font-size:7.6px;color:#505050;letter-spacing:0.5px">02/03 10:31</div>
<div class="a s k" style="left:404px;top:346.41px;font-size:8px;color:#555">低危菌种保存方案</div>
<div class="a s k" style="left:508px;top:346.41px;font-size:8px;color:#555">冰箱2</div>
<div class="a s l" style="left:563.7px;top:345.81px;font-size:7.6px;color:#505050">1</div>
<div class="a s l" style="left:618.8px;top:345.81px;font-size:7.6px;color:#505050;letter-spacing:0.05px">02001</div>
<div class="a s l" style="left:685.3px;top:345.81px;font-size:7.6px;color:#505050">1</div>
<div class="a s l" style="left:747px;top:345.81px;font-size:7.6px;color:#505050">3</div>
<div class="a s l" style="left:800.1px;top:346.61px;font-size:7.6px;color:#505050;letter-spacing:0.3px">value</div>
<div class="a s l" style="left:854.3px;top:346.61px;font-size:7.6px;color:#505050;letter-spacing:0.3px">value</div>
<div class="a s l" style="left:909.7px;top:346.61px;font-size:7.6px;color:#505050;letter-spacing:0.3px">value</div>
<div class="a s l" style="left:975.8px;top:346.61px;font-size:7.6px;color:#505050;letter-spacing:0.3px">value</div>
<div class="a" style="left:46px;top:361.6px;width:178px;height:19.6px;background:#dce6f8"></div>
<div class="a" style="left:224px;top:361.6px;width:853.8px;height:19.6px;background:#eff1f6"></div>
<div class="a" style="left:54.2px;top:366.87px;width:8.6px;height:7.4px;border:1px solid #9c9c9c;border-radius:1.5px;background:#ececec"></div>
<div class="a s l" style="left:75.6px;top:366.42px;font-size:7.6px;color:#5f6d9c;letter-spacing:0.4px">B200910203021</div>
<div class="a s k" style="left:152px;top:367.02px;font-size:8px;color:#555">肺炎克雷伯菌</div>
<div class="a" style="left:236px;top:370.27px;width:4.6px;height:3.2px;background:#22b02a"></div>
<div class="a s k" style="left:245.4px;top:367.02px;font-size:8px;color:#444">在库</div>
<div class="a s l" style="left:313.6px;top:366.42px;font-size:7.6px;color:#505050;letter-spacing:0.5px">02/03 10:31</div>
<div class="a s k" style="left:404px;top:367.02px;font-size:8px;color:#555">高危菌种保存方案</div>
<div class="a s k" style="left:508px;top:367.02px;font-size:8px;color:#555">冰箱1</div>
<div class="a s l" style="left:563.7px;top:366.42px;font-size:7.6px;color:#505050">1</div>
<div class="a s l" style="left:618.8px;top:366.42px;font-size:7.6px;color:#505050;letter-spacing:0.05px">01001</div>
<div class="a s l" style="left:685.3px;top:366.42px;font-size:7.6px;color:#505050">1</div>
<div class="a s l" style="left:747px;top:366.42px;font-size:7.6px;color:#505050">1</div>
<div class="a s l" style="left:800.1px;top:367.22px;font-size:7.6px;color:#505050;letter-spacing:0.3px">value</div>
<div class="a s l" style="left:854.3px;top:367.22px;font-size:7.6px;color:#505050;letter-spacing:0.3px">value</div>
<div class="a s l" style="left:909.7px;top:367.22px;font-size:7.6px;color:#505050;letter-spacing:0.3px">value</div>
<div class="a s l" style="left:975.8px;top:367.22px;font-size:7.6px;color:#505050;letter-spacing:0.3px">value</div>
<div class="a" style="left:46px;top:382.25px;width:178px;height:19.6px;background:#dce6f8"></div>
<div class="a" style="left:224px;top:382.25px;width:853.8px;height:19.6px;background:#eff1f6"></div>
<div class="a" style="left:54.2px;top:387.48px;width:8.6px;height:7.4px;border:1px solid #9c9c9c;border-radius:1.5px;background:#ececec"></div>
<div class="a s l" style="left:75.6px;top:387.03px;font-size:7.6px;color:#5f6d9c;letter-spacing:0.4px">B200910203021</div>
<div class="a s k" style="left:152px;top:387.63px;font-size:8px;color:#555">肺炎克雷伯菌</div>
<div class="a" style="left:236px;top:390.88px;width:4.6px;height:3.2px;background:#f2b400"></div>
<div class="a s k" style="left:245.4px;top:387.63px;font-size:8px;color:#444">领用中</div>
<div class="a s l" style="left:313.6px;top:387.03px;font-size:7.6px;color:#505050;letter-spacing:0.5px">02/03 10:31</div>
<div class="a s k" style="left:404px;top:387.63px;font-size:8px;color:#555">高危菌种保存方案</div>
<div class="a s k" style="left:508px;top:387.63px;font-size:8px;color:#555">冰箱1</div>
<div class="a s l" style="left:563.7px;top:387.03px;font-size:7.6px;color:#505050">1</div>
<div class="a s l" style="left:618.8px;top:387.03px;font-size:7.6px;color:#505050;letter-spacing:0.05px">01001</div>
<div class="a s l" style="left:685.3px;top:387.03px;font-size:7.6px;color:#505050">1</div>
<div class="a s l" style="left:747px;top:387.03px;font-size:7.6px;color:#505050">2</div>
<div class="a s l" style="left:800.1px;top:387.83px;font-size:7.6px;color:#505050;letter-spacing:0.3px">value</div>
<div class="a s l" style="left:854.3px;top:387.83px;font-size:7.6px;color:#505050;letter-spacing:0.3px">value</div>
<div class="a s l" style="left:909.7px;top:387.83px;font-size:7.6px;color:#505050;letter-spacing:0.3px">value</div>
<div class="a s l" style="left:975.8px;top:387.83px;font-size:7.6px;color:#505050;letter-spacing:0.3px">value</div>
<div class="a" style="left:46px;top:402.9px;width:178px;height:19.6px;background:#dce6f8"></div>
<div class="a" style="left:224px;top:402.9px;width:853.8px;height:19.6px;background:#eff1f6"></div>
<div class="a" style="left:54.2px;top:408.09px;width:8.6px;height:7.4px;border:1px solid #9c9c9c;border-radius:1.5px;background:#ececec"></div>
<div class="a s l" style="left:75.6px;top:407.64px;font-size:7.6px;color:#5f6d9c;letter-spacing:0.4px">B200910203021</div>
<div class="a s k" style="left:152px;top:408.24px;font-size:8px;color:#555">肺炎克雷伯菌</div>
<div class="a" style="left:236px;top:411.49px;width:4.6px;height:3.2px;background:#22b02a"></div>
<div class="a s k" style="left:245.4px;top:408.24px;font-size:8px;color:#444">在库</div>
<div class="a s l" style="left:313.6px;top:407.64px;font-size:7.6px;color:#505050;letter-spacing:0.5px">02/03 10:31</div>
<div class="a s k" style="left:404px;top:408.24px;font-size:8px;color:#555">高危菌种保存方案</div>
<div class="a s k" style="left:508px;top:408.24px;font-size:8px;color:#555">冰箱1</div>
<div class="a s l" style="left:563.7px;top:407.64px;font-size:7.6px;color:#505050">1</div>
<div class="a s l" style="left:618.8px;top:407.64px;font-size:7.6px;color:#505050;letter-spacing:0.05px">01001</div>
<div class="a s l" style="left:685.3px;top:407.64px;font-size:7.6px;color:#505050">1</div>
<div class="a s l" style="left:747px;top:407.64px;font-size:7.6px;color:#505050">3</div>
<div class="a s l" style="left:800.1px;top:408.44px;font-size:7.6px;color:#505050;letter-spacing:0.3px">value</div>
<div class="a s l" style="left:854.3px;top:408.44px;font-size:7.6px;color:#505050;letter-spacing:0.3px">value</div>
<div class="a s l" style="left:909.7px;top:408.44px;font-size:7.6px;color:#505050;letter-spacing:0.3px">value</div>
<div class="a s l" style="left:975.8px;top:408.44px;font-size:7.6px;color:#505050;letter-spacing:0.3px">value</div>
<div class="a" style="left:46px;top:423.55px;width:178px;height:19.6px;background:#dce6f8"></div>
<div class="a" style="left:224px;top:423.55px;width:853.8px;height:19.6px;background:#eff1f6"></div>
<div class="a" style="left:54.2px;top:428.70px;width:8.6px;height:7.4px;border:1px solid #9c9c9c;border-radius:1.5px;background:#ececec"></div>
<div class="a s l" style="left:75.6px;top:428.25px;font-size:7.6px;color:#5f6d9c;letter-spacing:0.4px">B200910203021</div>
<div class="a s k" style="left:152px;top:428.85px;font-size:8px;color:#555">肺炎克雷伯菌</div>
<div class="a" style="left:236px;top:432.1px;width:4.6px;height:3.2px;background:#22b02a"></div>
<div class="a s k" style="left:245.4px;top:428.85px;font-size:8px;color:#444">在库</div>
<div class="a s l" style="left:313.6px;top:428.25px;font-size:7.6px;color:#505050;letter-spacing:0.5px">02/03 10:31</div>
<div class="a s k" style="left:404px;top:428.85px;font-size:8px;color:#555">低危菌种保存方案</div>
<div class="a s k" style="left:508px;top:428.85px;font-size:8px;color:#555">冰箱2</div>
<div class="a s l" style="left:563.7px;top:428.25px;font-size:7.6px;color:#505050">1</div>
<div class="a s l" style="left:618.8px;top:428.25px;font-size:7.6px;color:#505050;letter-spacing:0.05px">02001</div>
<div class="a s l" style="left:685.3px;top:428.25px;font-size:7.6px;color:#505050">1</div>
<div class="a s l" style="left:747px;top:428.25px;font-size:7.6px;color:#505050">1</div>
<div class="a s l" style="left:800.1px;top:429.05px;font-size:7.6px;color:#505050;letter-spacing:0.3px">value</div>
<div class="a s l" style="left:854.3px;top:429.05px;font-size:7.6px;color:#505050;letter-spacing:0.3px">value</div>
<div class="a s l" style="left:909.7px;top:429.05px;font-size:7.6px;color:#505050;letter-spacing:0.3px">value</div>
<div class="a s l" style="left:975.8px;top:429.05px;font-size:7.6px;color:#505050;letter-spacing:0.3px">value</div>
<div class="a" style="left:46px;top:444.2px;width:178px;height:19.6px;background:#dce6f8"></div>
<div class="a" style="left:224px;top:444.2px;width:853.8px;height:19.6px;background:#eff1f6"></div>
<div class="a" style="left:54.2px;top:449.31px;width:8.6px;height:7.4px;border:1px solid #9c9c9c;border-radius:1.5px;background:#ececec"></div>
<div class="a s l" style="left:75.6px;top:448.86px;font-size:7.6px;color:#5f6d9c;letter-spacing:0.4px">B200910203021</div>
<div class="a s k" style="left:152px;top:449.46px;font-size:8px;color:#555">肺炎克雷伯菌</div>
<div class="a" style="left:236px;top:452.71px;width:4.6px;height:3.2px;background:#22b02a"></div>
<div class="a s k" style="left:245.4px;top:449.46px;font-size:8px;color:#444">在库</div>
<div class="a s l" style="left:313.6px;top:448.86px;font-size:7.6px;color:#505050;letter-spacing:0.5px">02/03 10:31</div>
<div class="a s k" style="left:404px;top:449.46px;font-size:8px;color:#555">低危菌种保存方案</div>
<div class="a s k" style="left:508px;top:449.46px;font-size:8px;color:#555">冰箱2</div>
<div class="a s l" style="left:563.7px;top:448.86px;font-size:7.6px;color:#505050">1</div>
<div class="a s l" style="left:618.8px;top:448.86px;font-size:7.6px;color:#505050;letter-spacing:0.05px">02001</div>
<div class="a s l" style="left:685.3px;top:448.86px;font-size:7.6px;color:#505050">1</div>
<div class="a s l" style="left:747px;top:448.86px;font-size:7.6px;color:#505050">2</div>
<div class="a s l" style="left:800.1px;top:449.66px;font-size:7.6px;color:#505050;letter-spacing:0.3px">value</div>
<div class="a s l" style="left:854.3px;top:449.66px;font-size:7.6px;color:#505050;letter-spacing:0.3px">value</div>
<div class="a s l" style="left:909.7px;top:449.66px;font-size:7.6px;color:#505050;letter-spacing:0.3px">value</div>
<div class="a s l" style="left:975.8px;top:449.66px;font-size:7.6px;color:#505050;letter-spacing:0.3px">value</div>
<div class="a" style="left:46px;top:464.85px;width:178px;height:19.6px;background:#dce6f8"></div>
<div class="a" style="left:224px;top:464.85px;width:853.8px;height:19.6px;background:#eff1f6"></div>
<div class="a" style="left:54.2px;top:469.92px;width:8.6px;height:7.4px;border:1px solid #9c9c9c;border-radius:1.5px;background:#ececec"></div>
<div class="a s l" style="left:75.6px;top:469.47px;font-size:7.6px;color:#5f6d9c;letter-spacing:0.4px">B200910203021</div>
<div class="a s k" style="left:152px;top:470.07px;font-size:8px;color:#555">肺炎克雷伯菌</div>
<div class="a" style="left:236px;top:473.32px;width:4.6px;height:3.2px;background:#22b02a"></div>
<div class="a s k" style="left:245.4px;top:470.07px;font-size:8px;color:#444">在库</div>
<div class="a s l" style="left:313.6px;top:469.47px;font-size:7.6px;color:#505050;letter-spacing:0.5px">02/03 10:31</div>
<div class="a s k" style="left:404px;top:470.07px;font-size:8px;color:#555">低危菌种保存方案</div>
<div class="a s k" style="left:508px;top:470.07px;font-size:8px;color:#555">冰箱2</div>
<div class="a s l" style="left:563.7px;top:469.47px;font-size:7.6px;color:#505050">1</div>
<div class="a s l" style="left:618.8px;top:469.47px;font-size:7.6px;color:#505050;letter-spacing:0.05px">02001</div>
<div class="a s l" style="left:685.3px;top:469.47px;font-size:7.6px;color:#505050">1</div>
<div class="a s l" style="left:747px;top:469.47px;font-size:7.6px;color:#505050">3</div>
<div class="a s l" style="left:800.1px;top:470.27px;font-size:7.6px;color:#505050;letter-spacing:0.3px">value</div>
<div class="a s l" style="left:854.3px;top:470.27px;font-size:7.6px;color:#505050;letter-spacing:0.3px">value</div>
<div class="a s l" style="left:909.7px;top:470.27px;font-size:7.6px;color:#505050;letter-spacing:0.3px">value</div>
<div class="a s l" style="left:975.8px;top:470.27px;font-size:7.6px;color:#505050;letter-spacing:0.3px">value</div>
<div class="a" style="left:46px;top:485.5px;width:178px;height:8px;background:#dce6f8"></div>
<div class="a" style="left:224px;top:485.5px;width:853.8px;height:8px;background:#eff1f6"></div>
<div class="a" style="left:54.2px;top:490.80px;width:8.6px;height:7.4px;border:1px solid #9c9c9c;border-radius:1.5px;background:#ececec"></div>
<div class="a" style="left:787.3px;top:90.5px;width:1px;height:402px;background:#e8eaef"></div>
<div class="a" style="left:34.6px;top:492.3px;width:1046px;height:24px;background:#fff"></div>
<div class="a" style="left:34.6px;top:491.8px;width:190px;height:1px;background:#e6e9ee"></div>
<div class="a" style="left:223.6px;top:492.5px;width:1px;height:24px;background:#eef0f4"></div>
<div class="a" style="left:224.5px;top:492.2px;width:860px;height:2.8px;background:#e0e4eb"></div>
<div class="a" style="left:224.5px;top:492.2px;width:234.7px;height:2.8px;background:#3452c6"></div>
<div class="a s" style="left:326.3px;top:500.85px;font-size:8px;color:#222;-webkit-text-stroke:0.22px currentColor">保藏信息</div>
<div class="a s k" style="left:532.8px;top:500.95px;font-size:8px;color:#777">菌种信息</div>
<div class="a s k" style="left:739.6px;top:500.95px;font-size:8px;color:#777">检验信息</div>
<div class="a s k" style="left:945.9px;top:500.95px;font-size:8px;color:#777">患者信息</div>
</div></body></html>
